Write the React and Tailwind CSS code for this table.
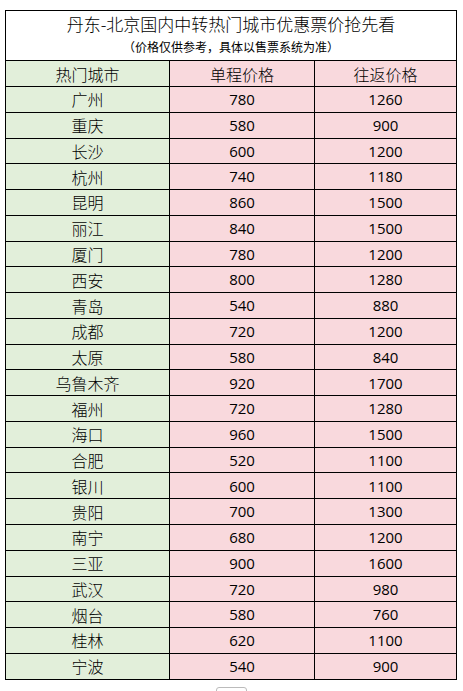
import React from "react";

const rows = [
  ["广州", 780, 1260],
  ["重庆", 580, 900],
  ["长沙", 600, 1200],
  ["杭州", 740, 1180],
  ["昆明", 860, 1500],
  ["丽江", 840, 1500],
  ["厦门", 780, 1200],
  ["西安", 800, 1280],
  ["青岛", 540, 880],
  ["成都", 720, 1200],
  ["太原", 580, 840],
  ["乌鲁木齐", 920, 1700],
  ["福州", 720, 1280],
  ["海口", 960, 1500],
  ["合肥", 520, 1100],
  ["银川", 600, 1100],
  ["贵阳", 700, 1300],
  ["南宁", 680, 1200],
  ["三亚", 900, 1600],
  ["武汉", 720, 980],
  ["烟台", 580, 760],
  ["桂林", 620, 1100],
  ["宁波", 540, 900],
];

const cjk = { fontFamily: '"Noto Sans CJK SC", sans-serif' };
const num = { fontFamily: '"Open Sans", "Liberation Sans", sans-serif' };

export default function App() {
  return (
    <div className="w-[463px] h-[691px] bg-white overflow-hidden text-black" style={cjk}>
      <div className="pt-[10px] pl-[5px]">
        <div className="w-[452px] border-[1.5px] border-black">
          <div className="h-[50px] flex flex-col items-center border-b-[1.5px] border-black">
            <div className="text-[17px] leading-[24px] pt-[1px] font-light">丹东-北京国内中转热门城市优惠票价抢先看</div>
            <div className="text-[12px] leading-[22px]">（价格仅供参考，具体以售票系统为准）</div>
          </div>
          <div className="grid grid-cols-[164px_145px_1fr]">
            <div className="h-[25px] flex items-center justify-center bg-[#e2efda] border-r-[1.5px] border-black text-[16px] font-light">热门城市</div>
            <div className="h-[25px] flex items-center justify-center bg-[#f9d9dd] border-r-[1.5px] border-black text-[16px] font-light">单程价格</div>
            <div className="h-[25px] flex items-center justify-center bg-[#f9d9dd] text-[16px] font-light">往返价格</div>
            {rows.map(([city, one, two]) => (
              <React.Fragment key={city}>
                <div className="h-[25.78px] flex items-center justify-center bg-[#e2efda] border-t-[1.5px] border-r-[1.5px] border-black text-[16px] font-light">{city}</div>
                <div className="h-[25.78px] flex items-center justify-center bg-[#f9d9dd] border-t-[1.5px] border-r-[1.5px] border-black text-[15px]" style={num}>{one}</div>
                <div className="h-[25.78px] flex items-center justify-center bg-[#f9d9dd] border-t-[1.5px] border-black text-[15px]" style={num}>{two}</div>
              </React.Fragment>
            ))}
          </div>
        </div>
        <div className="flex justify-center mt-[7px] pr-[5px]">
          <div className="w-[31px] h-[20px] border border-[#bbb] rounded-[3px] mr-[1px]" />
        </div>
      </div>
    </div>
  );
}
